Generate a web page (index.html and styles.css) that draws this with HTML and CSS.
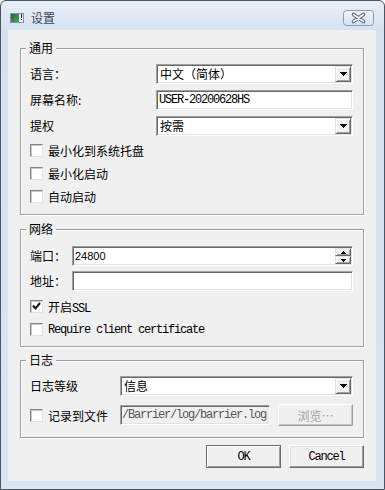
FILE: index.html
```html
<!DOCTYPE html>
<html lang="zh-CN">
<head>
  <meta charset="UTF-8" />
  <title>设置</title>
  <link rel="stylesheet" href="styles.css">
</head>
<body>

<div class="window">
  <div class="titlebar">
    <svg class="app-icon" width="14" height="10" viewBox="0 0 14 10">
      <defs>
        <linearGradient id="ig" x1="0" y1="0" x2="1" y2="1">
          <stop offset="0" stop-color="#2b5d57"/>
          <stop offset="1" stop-color="#46a862"/>
        </linearGradient>
      </defs>
      <rect x="0.5" y="0.5" width="13" height="9" fill="#eef1f3" stroke="#8a9096"/>
      <rect x="1" y="1" width="8" height="8" fill="url(#ig)"/>
      <rect x="11" y="1" width="1" height="4" fill="#1d1d1d"/>
      <rect x="11" y="6" width="1" height="1" fill="#1d1d1d"/>
    </svg>
    <span class="title">设置</span>
    <span class="close-btn">
      <svg width="31" height="16" viewBox="0 0 31 16">
        <defs>
          <linearGradient id="cg" x1="0" y1="0" x2="0" y2="1">
            <stop offset="0" stop-color="#f1f5fa"/>
            <stop offset="1" stop-color="#d6e1ee"/>
          </linearGradient>
        </defs>
        <rect x="0.5" y="0.5" width="30" height="15" rx="3" fill="url(#cg)" stroke="#8e9db0"/>
        <path d="M10.5 4.5 L20.5 11.5 M20.5 4.5 L10.5 11.5" stroke="#5a6679" stroke-width="3.6" stroke-linecap="round"/>
        <path d="M10.5 4.5 L20.5 11.5 M20.5 4.5 L10.5 11.5" stroke="#f4f6f9" stroke-width="1.6" stroke-linecap="round"/>
      </svg>
    </span>
  </div>

  <div class="client">

    <fieldset class="group general">
      <legend>通用</legend>
      <div class="row">
        <label class="lbl">语言：</label>
        <div class="combo">
          <span class="value">中文（简体）</span>
          <span class="drop"><svg width="7" height="4" viewBox="0 0 7 4"><path d="M0 0h7v1H0z M1 1h5v1H1z M2 2h3v1H2z M3 3h1v1H3z"/></svg></span>
        </div>
      </div>
      <div class="row">
        <label class="lbl">屏幕名称:</label>
        <div class="field"><span class="m">USER-20200628HS</span></div>
      </div>
      <div class="row">
        <label class="lbl">提权</label>
        <div class="combo">
          <span class="value">按需</span>
          <span class="drop"><svg width="7" height="4" viewBox="0 0 7 4"><path d="M0 0h7v1H0z M1 1h5v1H1z M2 2h3v1H2z M3 3h1v1H3z"/></svg></span>
        </div>
      </div>
      <div class="check"><span class="box"></span><span>最小化到系统托盘</span></div>
      <div class="check"><span class="box"></span><span>最小化启动</span></div>
      <div class="check"><span class="box"></span><span>自动启动</span></div>
    </fieldset>

    <fieldset class="group net">
      <legend>网络</legend>
      <div class="row">
        <label class="lbl">端口：</label>
        <div class="field spinfield">
          <span class="num">24800</span>
          <span class="spin">
            <span class="spin-btn"><svg width="5" height="3" viewBox="0 0 5 3"><path d="M2 0h1v1H2z M1 1h3v1H1z M0 2h5v1H0z"/></svg></span>
            <span class="spin-btn"><svg width="5" height="3" viewBox="0 0 5 3"><path d="M0 0h5v1H0z M1 1h3v1H1z M2 2h1v1H2z"/></svg></span>
          </span>
        </div>
      </div>
      <div class="row">
        <label class="lbl">地址：</label>
        <div class="field"></div>
      </div>
      <div class="check">
        <span class="box checked"><svg width="11" height="11" viewBox="0 0 11 11"><path d="M2 4.5 L4.5 7.5 L9 2" fill="none" stroke="#111" stroke-width="2"/></svg></span>
        <span>开启<span class="m">SSL</span></span>
      </div>
      <div class="check"><span class="box"></span><span class="m">Require client certificate</span></div>
    </fieldset>

    <fieldset class="group log">
      <legend>日志</legend>
      <div class="row">
        <label class="lbl">日志等级</label>
        <div class="combo">
          <span class="value">信息</span>
          <span class="drop"><svg width="7" height="4" viewBox="0 0 7 4"><path d="M0 0h7v1H0z M1 1h5v1H1z M2 2h3v1H2z M3 3h1v1H3z"/></svg></span>
        </div>
      </div>
      <div class="row file-row">
        <div class="file-check"><span class="box"></span><span>记录到文件</span></div>
        <div class="field disabled"><span class="m">/Barrier/log/barrier.log</span></div>
        <button class="browse" disabled>浏览…</button>
      </div>
    </fieldset>

    <div class="actions">
      <button class="btn default">OK</button>
      <button class="btn">Cancel</button>
    </div>

  </div>
</div>

</body>
</html>
```

FILE: styles.css
```css
body {
  margin: 0;
  font-family: "Noto Sans CJK SC", "Liberation Sans", sans-serif;
  font-size: 12px;
  color: #000;
}
.window {
  width: 385px;
  height: 490px;
  box-sizing: border-box;
  border: 1px solid #4a5563;
  border-radius: 6px 6px 0 0;
  background: linear-gradient(#e8eff7, #d4e1f0 30px, #d7e4f2);
  overflow: hidden;
}
.titlebar {
  height: 29px;
  box-sizing: border-box;
  padding: 5px 10px 0 9px;
  display: flex;
  align-items: center;
}
.app-icon {
  display: block;
}
.title {
  margin-left: 7px;
  line-height: 14px;
  color: #3a4656;
}
.close-btn {
  margin-left: auto;
  display: flex;
}
.client {
  margin: 0 8px 0 7px;
  height: 451px;
  box-sizing: border-box;
  padding: 11px 12px 0;
  background: #f0f0f0;
}

/* group boxes */
.group {
  margin: 0;
  min-width: 0;
  padding: 9px 10px 9px 9px;
  border: 1px solid #a0a0a0;
  box-shadow: 1px 1px 0 #fff, inset 1px 1px 0 #fff;
}
.group legend {
  margin-left: -4px;
  padding: 0 3px;
  height: 14px;
  line-height: 14px;
  background: #f0f0f0;
}
.net {
  margin-top: 7px;
  padding-top: 10px;
  padding-bottom: 8px;
}
.log {
  margin-top: 6px;
  padding-bottom: 11px;
}

.row {
  display: flex;
  align-items: center;
  height: 20px;
  margin-top: 6px;
}
legend + .row {
  margin-top: 0;
}
.net .row + .row {
  margin-top: 5px;
}
.net .row + .check {
  margin-top: 7px;
}
.lbl {
  flex: none;
  line-height: 14px;
}
.general .lbl { width: 126px; }
.net .lbl { width: 42px; }
.log .lbl { width: 90px; }

.check {
  display: flex;
  align-items: center;
  height: 17px;
  margin-top: 6px;
  gap: 5px;
}
.box {
  width: 13px;
  height: 13px;
  box-sizing: border-box;
  flex: none;
  display: flex;
  align-items: center;
  justify-content: center;
  background: #fff;
  border: 1px solid;
  border-color: #858585 #e3e3e3 #e3e3e3 #858585;
  box-shadow: inset 1px 1px 0 #c8c8c8;
}

/* latin text in the dialog's bitmap font */
.m {
  font-family: "Liberation Mono", monospace;
  font-size: 12px;
  letter-spacing: -1.2px;
}

/* sunken controls */
.combo, .field {
  flex: 1;
  height: 20px;
  box-sizing: border-box;
  display: flex;
  align-items: center;
  background: #fff;
  border: 1px solid;
  border-color: #a0a0a0 #fff #fff #a0a0a0;
  box-shadow: inset 1px 1px 0 #696969, inset -1px -1px 0 #e3e3e3;
  overflow: hidden;
  white-space: nowrap;
}
.combo {
  padding: 1px 1px 1px 3px;
}
.field {
  padding: 1px 2px 1px 2px;
}
.value {
  flex: 1;
  line-height: 14px;
}
.drop, .spin-btn {
  box-sizing: border-box;
  display: flex;
  align-items: center;
  justify-content: center;
  background: #f0f0f0;
  border: 1px solid;
  border-color: #e3e3e3 #696969 #696969 #e3e3e3;
  box-shadow: inset 1px 1px 0 #fff, inset -1px -1px 0 #a0a0a0;
}
.drop {
  width: 16px;
  height: 16px;
  flex: none;
}
.drop svg, .spin-btn svg {
  display: block;
  fill: #000;
}

.spinfield {
  padding-right: 1px;
}
.num {
  flex: 1;
  font-family: "Liberation Sans", sans-serif;
  font-size: 11px;
}
.spin {
  width: 16px;
  height: 16px;
  display: flex;
  flex-direction: column;
}
.spin-btn {
  height: 8px;
}

.file-row {
  height: 22px;
  margin-top: 8px;
}
.file-check {
  width: 90px;
  flex: none;
  display: flex;
  align-items: center;
  gap: 5px;
}
.field.disabled {
  flex: none;
  width: 150px;
  background: #f0f0f0;
  color: #555;
  padding-left: 1px;
}
.browse {
  width: 75px;
  height: 22px;
  margin-left: 8px;
  padding: 0;
  font-family: "Noto Sans CJK SC", sans-serif;
  font-size: 12px;
  color: #a0a0a0;
  background: #f0f0f0;
  border: 1px solid;
  border-color: #fff #a0a0a0 #a0a0a0 #fff;
  box-shadow: inset -1px -1px 0 #c8c8c8;
}

/* dialog buttons */
.actions {
  display: flex;
  justify-content: flex-end;
  gap: 8px;
  margin-top: 7px;
}
.btn {
  width: 75px;
  height: 23px;
  padding: 0;
  font-family: "Liberation Mono", monospace;
  font-size: 12px;
  letter-spacing: -1.2px;
  color: #000;
  background: #f0f0f0;
  border: 1px solid;
  border-color: #fff #696969 #696969 #fff;
  box-shadow: inset -1px -1px 0 #a0a0a0, inset 1px 1px 0 #e3e3e3;
}
.btn.default {
  border-color: #6a6a6a;
  box-shadow: inset 1px 1px 0 #fff, inset -1px -1px 0 #a0a0a0;
}
```
